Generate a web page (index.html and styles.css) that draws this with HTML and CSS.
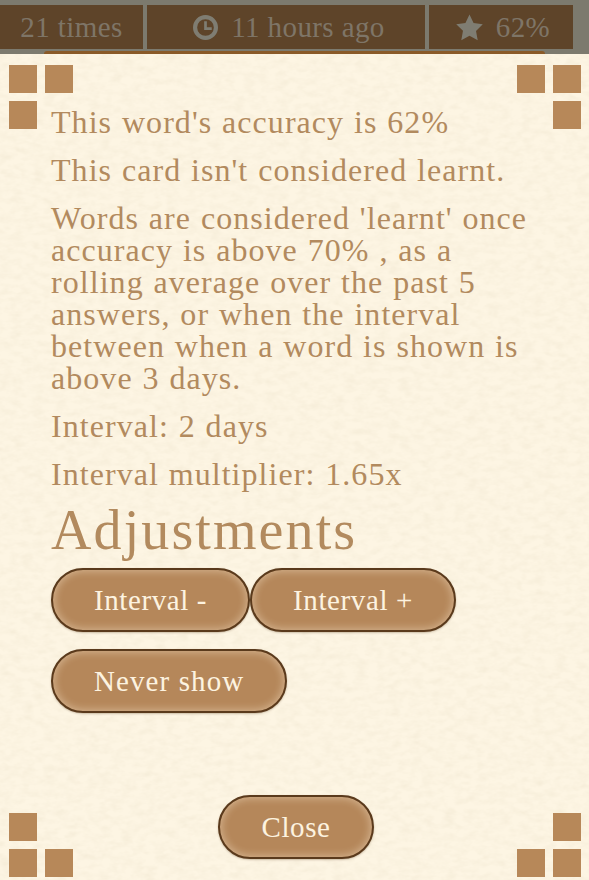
FILE: index.html
```html
<!DOCTYPE html>
<html lang="en">
<head>
<meta charset="utf-8">
<title>Word details</title>
<link rel="stylesheet" href="styles.css">
</head>
<body>
<div class="stats">
  <div class="stat stat-times">21 times</div>
  <div class="stat stat-when">
    <svg class="icon" viewBox="0 0 24 24"><circle cx="12" cy="12" r="10" fill="none" stroke="currentColor" stroke-width="4"/><path d="M12 6v7h6" fill="none" stroke="currentColor" stroke-width="2.6"/></svg>
    <span>11 hours ago</span>
  </div>
  <div class="stat stat-score">
    <svg class="icon" viewBox="0 0 24 24"><path d="M12 .5l3.6 7.6 8.2 1.1-6 5.800 1.500 8.300L12 19.300l-7.300 4 1.500-8.300-6-5.800 8.200-1.100z" fill="currentColor"/></svg>
    <span>62%</span>
  </div>
</div>
<div class="strip"><div class="strip-edge"></div></div>
<main class="panel">
  <svg class="paper" aria-hidden="true"><filter id="grain"><feTurbulence type="fractalNoise" baseFrequency="0.09 0.16" numOctaves="3" seed="4"/><feColorMatrix values="0 0 0 0 0.80  0 0 0 0 0.72  0 0 0 0 0.55  0.45 0.3 0 0 -0.3"/></filter><rect width="100%" height="100%" filter="url(#grain)"/></svg>
  <div class="corner tl"><i></i><i></i><i></i></div>
  <div class="corner tr"><i></i><i></i><i></i></div>
  <div class="corner bl"><i></i><i></i><i></i></div>
  <div class="corner br"><i></i><i></i><i></i></div>
  <div class="content">
    <p>This word's accuracy is 62%</p>
    <p>This card isn't considered learnt.</p>
    <p>Words are considered 'learnt' once accuracy is above 70% , as a rolling average over the past 5 answers, or when the interval between when a word is shown is above 3 days.</p>
    <p>Interval: 2 days</p>
    <p>Interval multiplier: 1.65x</p>
    <h2>Adjustments</h2>
    <div class="actions">
      <button class="btn">Interval -</button><button class="btn">Interval +</button>
    </div>
    <div class="actions">
      <button class="btn btn-wide">Never show</button>
    </div>
  </div>
  <div class="footer"><button class="btn">Close</button></div>
</main>
</body>
</html>
```
FILE: styles.css
```css
* { box-sizing: border-box; }
html, body { margin: 0; height: 880px; overflow: hidden; }
body {
  background: #7c7a6e;
  font-family: "Liberation Serif", serif;
  color: #b28a5e;
  display: flex;
  flex-direction: column;
}
.stats {
  display: flex;
  gap: 4px;
  height: 49px;
  padding: 5px 16px 0 0;
  background: #7c7a6e;
  font-size: 29px;
  color: #7e7567;
  letter-spacing: 0.4px;
}
.stat {
  background: #5e4429;
  display: flex;
  align-items: center;
  justify-content: center;
  gap: 13px;
}
.stat-times { width: 143px; }
.stat-when { width: 278px; padding-left: 6px; }
.stat-score { width: 144px; padding-left: 4px; }
.icon { width: 24px; height: 24px; color: #7f7d72; }
.stat-when .icon { width: 25px; height: 25px; }
.stat-score .icon { width: 27px; height: 27px; }
.strip {
  height: 5px;
  padding: 2px 44px 0;
}
.strip-edge {
  height: 3px;
  background: #8a5a28;
  border-radius: 3px 3px 0 0;
}
.panel {
  position: relative;
  flex: 1;
  display: flex;
  flex-direction: column;
  background: #fdf5e3;
  overflow: hidden;
}
.paper { position: absolute; inset: 0; width: 100%; height: 100%; }
.corner {
  position: absolute;
  display: grid;
  grid-template-columns: 28px 28px;
  grid-template-rows: 28px 28px;
  gap: 8px;
}
.corner i { background: #b78859; display: block; }
.tl { top: 11px; left: 9px; }
.tr { top: 11px; right: 8px; }
.bl { bottom: 3px; left: 9px; }
.br { bottom: 3px; right: 8px; }
.tl i:nth-child(3) { grid-column: 1; }
.tr i:nth-child(3) { grid-column: 2; }
.bl i:nth-child(1) { grid-column: 1 / span 2; width: 28px; }
.br i:nth-child(1) { grid-column: 2; }
.content {
  position: relative;
  padding: 52px 50px 0 51px;
  flex: 1;
}
p {
  margin: 0 0 16px;
  font-size: 32px;
  line-height: 32px;
  letter-spacing: 1.05px;
  word-spacing: 0.8px;
}
h2 {
  margin: 0;
  font-size: 56px;
  font-weight: normal;
  line-height: 48px;
  letter-spacing: 2.1px;
}
.actions { display: flex; margin-top: 14px; }
.actions + .actions { margin-top: 17px; }
.btn {
  height: 64px;
  padding: 0 41px;
  border: 2px solid #5a3a1c;
  border-radius: 32px;
  background: #b5875a;
  box-shadow: inset 0 0 8px 1px rgba(255, 240, 215, 0.45), 0 1px 2px rgba(90, 58, 28, 0.3);
  color: #fdf3e0;
  font-family: "Liberation Serif", serif;
  font-size: 29px;
  letter-spacing: 0.6px;
}
.btn-wide { letter-spacing: 1.1px; }
.footer {
  position: relative;
  display: flex;
  justify-content: center;
  padding: 0 0 21px;
  margin-left: 3px;
}
```
